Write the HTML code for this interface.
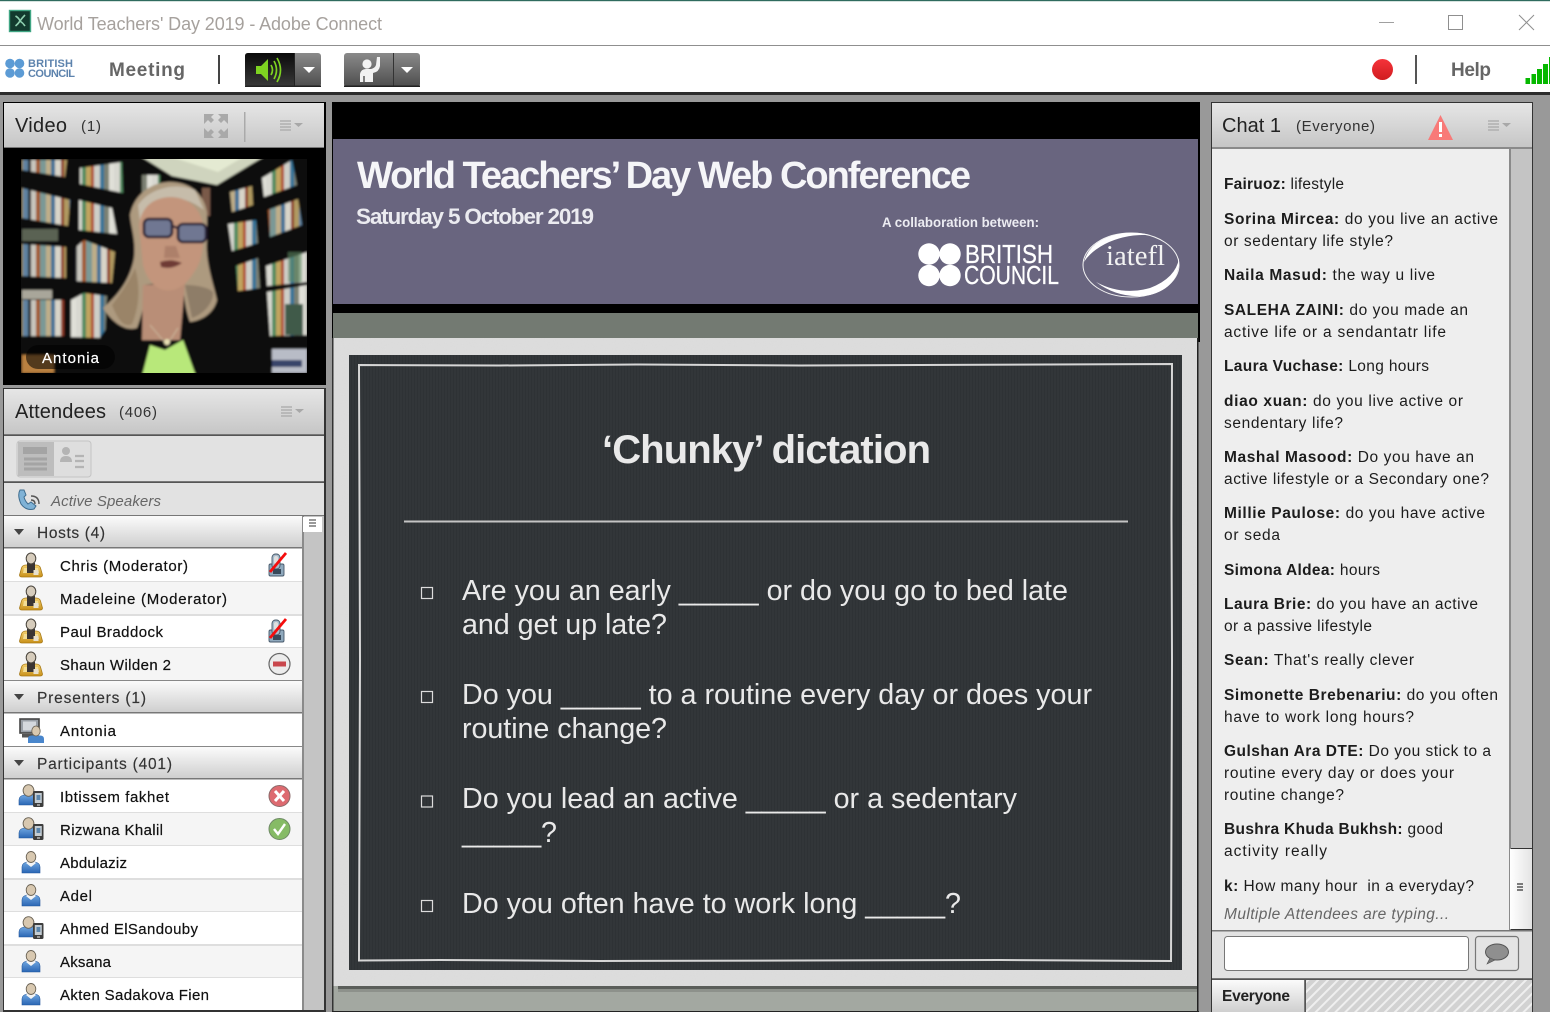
<!DOCTYPE html>
<html lang="en">
<head>
<meta charset="utf-8">
<title>World Teachers' Day 2019 - Adobe Connect</title>
<style>
html,body{margin:0;padding:0;background:#999;width:1550px;height:1012px;overflow:hidden}
svg{display:block;position:absolute;left:0;top:0}
text{font-family:"Liberation Sans",sans-serif;white-space:pre}
.n{font-size:15px;fill:#111;stroke:#111;stroke-width:.2}
.s{font-size:15.5px;fill:#333;stroke:#333;stroke-width:.15}
.c{font-size:15.5px;fill:#1c1c1c}
.c tspan{font-weight:bold}
.sl{font-size:28.7px;fill:#e9e9e9}
</style>
</head>
<body>
<svg width="1550" height="1012" viewBox="0 0 1550 1012" xmlns="http://www.w3.org/2000/svg">
<defs>
<linearGradient id="hd" x1="0" y1="0" x2="0" y2="1"><stop offset="0" stop-color="#e6e6e6"/><stop offset="1" stop-color="#c6c6c6"/></linearGradient>
<linearGradient id="sec" x1="0" y1="0" x2="0" y2="1"><stop offset="0" stop-color="#fbfbfb"/><stop offset="1" stop-color="#cfcfcf"/></linearGradient>
<linearGradient id="blk" x1="0" y1="0" x2="0" y2="1"><stop offset="0" stop-color="#0a0a0a"/><stop offset="1" stop-color="#3a3a3a"/></linearGradient>
<linearGradient id="gry" x1="0" y1="0" x2="0" y2="1"><stop offset="0" stop-color="#8a8a8a"/><stop offset="1" stop-color="#4d4d4d"/></linearGradient>
<linearGradient id="red" x1="0" y1="0" x2="0" y2="1"><stop offset="0" stop-color="#f5333a"/><stop offset="1" stop-color="#d01c1f"/></linearGradient>
<linearGradient id="gold" x1="0" y1="0" x2="0" y2="1"><stop offset="0" stop-color="#f5d272"/><stop offset="1" stop-color="#c89018"/></linearGradient>
<linearGradient id="blu" x1="0" y1="0" x2="0" y2="1"><stop offset="0" stop-color="#6fa6e0"/><stop offset="1" stop-color="#2a66b4"/></linearGradient>
<linearGradient id="white" x1="0" y1="0" x2="1" y2="0"><stop offset="0" stop-color="#fff"/><stop offset="1" stop-color="#e4e4e4"/></linearGradient>
<pattern id="hatch" width="7" height="7" patternUnits="userSpaceOnUse" patternTransform="rotate(45)"><rect width="7" height="7" fill="#d2d2d2"/><rect width="2" height="7" fill="#efefef"/></pattern>
<pattern id="bk1" width="46" height="80" patternUnits="userSpaceOnUse"><rect width="46" height="80" fill="#2c2c2e"/><rect x="0" width="5" height="80" fill="#bfae88"/><rect x="5" width="4" height="80" fill="#3e6f96"/><rect x="9" width="6" height="80" fill="#d8d4c8"/><rect x="15" width="3" height="80" fill="#8e3a28"/><rect x="18" width="5" height="80" fill="#b09a60"/><rect x="23" width="5" height="80" fill="#5f83a2"/><rect x="28" width="3" height="80" fill="#20262c"/><rect x="31" width="5" height="80" fill="#c8c6be"/><rect x="36" width="4" height="80" fill="#a2582a"/><rect x="40" width="6" height="80" fill="#7a9996"/></pattern>
<pattern id="bk2" width="38" height="80" patternUnits="userSpaceOnUse"><rect width="38" height="80" fill="#222424"/><rect x="0" width="6" height="80" fill="#d8d8d0"/><rect x="6" width="4" height="80" fill="#4f8a5e"/><rect x="10" width="5" height="80" fill="#c0a45e"/><rect x="15" width="3" height="80" fill="#b04e32"/><rect x="18" width="6" height="80" fill="#cfcfc8"/><rect x="24" width="4" height="80" fill="#36749a"/><rect x="28" width="5" height="80" fill="#7c8072"/><rect x="33" width="5" height="80" fill="#e0e0d8"/></pattern>
<pattern id="wv" width="3" height="3" patternUnits="userSpaceOnUse"><rect width="3" height="3" fill="#323639"/><rect width="1" height="3" fill="#2e3235"/></pattern>
<filter id="bl" x="-5%" y="-5%" width="110%" height="110%"><feGaussianBlur stdDeviation="1.1"/></filter>
<filter id="ic" x="-15%" y="-15%" width="130%" height="130%"><feGaussianBlur stdDeviation="0.3"/></filter>
<filter id="noise" x="0" y="0" width="100%" height="100%"><feTurbulence type="fractalNoise" baseFrequency="0.9" numOctaves="2" seed="3"/><feColorMatrix values="0 0 0 0 0.5  0 0 0 0 0.5  0 0 0 0 0.5  0 0 0 0.5 -0.12"/></filter>

<g id="host" filter="url(#ic)">
 <path d="M-11.5 10 L-9.5 3 Q-8.5 0 -5 0 L5 0 Q8.5 0 9.5 3 L11.5 10 Q11.5 12 9 12 L-9 12 Q-11.5 12 -11.5 10Z" fill="url(#gold)" stroke="#a87a18" stroke-width=".8"/>
 <path d="M-8 8 L-7 3 L7 3 L8 8Z" fill="#f3dd94"/>
 <path d="M-4 -2 L4 -2 L4 8 L-4 8Z" fill="#3a3632"/>
 <ellipse cx="0" cy="-6.5" rx="4.8" ry="5.5" fill="#d6ccbc" stroke="#4a443c" stroke-width="1"/>
 <rect x="2.5" y="5" width="5" height="5" fill="#e8e0cc"/>
</g>
<g id="user" filter="url(#ic)">
 <path d="M-9 11 L-9 5 Q-9 1 -4 0 L4 0 Q9 1 9 5 L9 11Z" fill="url(#blu)" stroke="#24589c" stroke-width=".6"/>
 <path d="M-5 1 L0 5 L5 1 L3 -1 L-3 -1Z" fill="#f4f4f4"/>
 <ellipse cx="0" cy="-5" rx="4.8" ry="5.5" fill="#d8c8b0" stroke="#6a6254" stroke-width=".9"/>
</g>
<g id="mob" filter="url(#ic)">
 <path d="M-13 9 L-13 4 Q-13 0 -8 -1 L1 -1 Q5 0 5 4 L5 9Z" fill="url(#blu)" stroke="#24589c" stroke-width=".6"/>
 <ellipse cx="-3.5" cy="-5.5" rx="5.4" ry="5.8" fill="#d8c8b0" stroke="#6a6254" stroke-width=".9"/>
 <rect x="1" y="-5" width="10.5" height="16" rx="1.2" fill="#3c3c3c"/>
 <rect x="2.8" y="-3" width="7" height="10" fill="#c4ccd2"/>
 <rect x="4.5" y="-1" width="3.8" height="5" fill="#5a84aa"/>
 <rect x="5" y="8" width="3" height="2" fill="#999"/>
</g>
<g id="mic" filter="url(#ic)">
 <rect x="-8" y="-1" width="15" height="12" rx="1.5" fill="#8fa9bd" stroke="#47596a" stroke-width=".9"/>
 <rect x="-5" y="-11" width="8" height="15" rx="3.5" fill="#a9bccb" stroke="#47596a" stroke-width=".9"/>
 <rect x="-3" y="-9" width="4" height="8" rx="2" fill="#dfdfdf"/>
 <path d="M-4 4 L4 4 L4 9 L-4 9Z" fill="#39495a"/>
 <path d="M-7 7 L9 -12" stroke="#f50d0d" stroke-width="2.8" fill="none"/>
</g>
</defs>

<!-- window background -->
<rect width="1550" height="1012" fill="#999"/>

<!-- title bar -->
<rect y="0" width="1550" height="45" fill="#fff"/>
<rect y="0" width="1550" height="1.2" fill="#2f6b5e"/>
<rect y="45" width="1550" height="1" fill="#8f8f8f"/>
<rect x="9.5" y="10.5" width="21" height="21" fill="#123a2e" stroke="#3fa583" stroke-width="1.4"/>
<path d="M15.5 16 Q19 18 20 21 Q22 18 25 15 M20 21 Q18 24 15.5 26 M20 21 Q23 23 25 26" stroke="#8fd0b0" stroke-width="1.6" fill="none"/>
<text x="37" y="30" font-size="18" fill="#a6a19d" textLength="345">World Teachers' Day 2019 - Adobe Connect</text>
<rect x="1379" y="22" width="15" height="1" fill="#a0a0a0"/>
<rect x="1448.5" y="15.5" width="14" height="14" fill="none" stroke="#8f8f8f"/>
<path d="M1519 15 L1534 30 M1534 15 L1519 30" stroke="#8f8f8f" stroke-width="1" fill="none"/>

<!-- toolbar -->
<rect y="46" width="1550" height="46" fill="#fff"/>
<rect y="92" width="1550" height="3" fill="#2c2c2c"/>
<g fill="#5b9bd5" filter="url(#ic)">
 <circle cx="10" cy="63.5" r="4.8"/><circle cx="19.5" cy="63.5" r="4.8"/><circle cx="10" cy="73" r="4.8"/><circle cx="19.5" cy="73" r="4.8"/>
</g>
<text x="28" y="67" font-size="11" font-weight="bold" fill="#5d83ad" textLength="45">BRITISH</text>
<text x="28" y="77" font-size="11" font-weight="bold" fill="#5d83ad" textLength="47">COUNCIL</text>
<text x="109" y="76" font-size="19" font-weight="bold" fill="#666" textLength="76">Meeting</text>
<rect x="218" y="55" width="2" height="29" fill="#444"/>

<rect x="245" y="53" width="76" height="34" rx="3" fill="url(#gry)"/>
<path d="M248 53 H294 V87 H248 Q245 87 245 84 V56 Q245 53 248 53Z" fill="url(#blk)"/>
<rect x="294" y="53" width="1" height="34" fill="#222"/>
<rect x="245" y="85.5" width="76" height="1.5" fill="#222"/>
<path d="M256 66 L261 66 L268 59 V81 L261 74 L256 74Z" fill="#7ed321"/>
<path d="M271 65 Q274 70 271 75 M274 61 Q279 70 274 79 M277 58 Q284 70 277 82" stroke="#7ed321" stroke-width="1.7" fill="none"/>
<path d="M303 67 H315 L309 73Z" fill="#fff"/>

<rect x="344" y="53" width="76" height="34" rx="3" fill="url(#gry)"/>
<rect x="393" y="53" width="1" height="34" fill="#333"/>
<rect x="344" y="85.5" width="76" height="1.5" fill="#222"/>
<circle cx="367" cy="64" r="4.6" fill="#f2f2f2"/>
<path d="M360 82 V74 Q361 69 366 69 L371 69 Q375 68 376 65 L377 57 L380 57 L380 66 Q379 72 373 73 V82Z" fill="#f2f2f2"/>
<path d="M364 76 V82" stroke="#333" stroke-width="1.2"/>
<path d="M401 67 H413 L407 73Z" fill="#fff"/>

<circle cx="1382.5" cy="69.5" r="10.5" fill="url(#red)"/>
<rect x="1415" y="55" width="2" height="29" fill="#555"/>
<text x="1451" y="76" font-size="19" font-weight="bold" fill="#666" textLength="40">Help</text>
<g fill="#06b800">
 <rect x="1525.5" y="78" width="4.5" height="6"/><rect x="1531.5" y="74" width="4.5" height="10"/><rect x="1537" y="69" width="5" height="15"/><rect x="1543" y="64" width="5" height="20"/><rect x="1549" y="57" width="1" height="27"/>
</g>

<!-- VIDEO PANEL -->
<rect x="3" y="102" width="323" height="283" fill="#000"/>
<rect x="4" y="103" width="320" height="44" fill="url(#hd)"/>
<rect x="4" y="147" width="320" height="1" fill="#777"/>
<text x="15" y="132" font-size="20" fill="#222" textLength="52">Video</text>
<text x="81" y="131" font-size="15" fill="#333" textLength="20">(1)</text>
<g fill="#a9a9a9">
 <path d="M204 114 H214 L211 117 L214 120 L211 123 L208 120 L204 124Z"/>
 <path d="M228 114 H218 L221 117 L218 120 L221 123 L224 120 L228 124Z"/>
 <path d="M204 138 H214 L211 135 L214 132 L211 129 L208 132 L204 128Z"/>
 <path d="M228 138 H218 L221 135 L218 132 L221 129 L224 132 L228 128Z"/>
</g>
<rect x="244" y="112" width="1.5" height="30" fill="#aaa"/>
<path d="M280 121 H291 M280 124 H291 M280 127 H291 M280 130 H291" stroke="#a8a8a8" stroke-width="1.2"/>
<path d="M294 123 H303 L298.5 127Z" fill="#a8a8a8"/>

<!-- video image -->
<svg x="21" y="159" width="286" height="214" viewBox="21 159 286 214">
 <g filter="url(#bl)">
 <rect x="18" y="156" width="292" height="220" fill="#0b0b0e"/>
 <path d="M140 156 H265 L217 185 L172 176Z" fill="#cfd4be"/>
 <path d="M168 156 H245 L218 172Z" fill="#e4ead2"/>
 <g>
  <path d="M22 160 H67 L65 177 L22 170Z" fill="url(#bk1)"/>
  <path d="M80 168 L122 162 L123 193 L80 184Z" fill="url(#bk2)"/>
  <path d="M22 188 L70 200 L68 226 L22 218Z" fill="url(#bk1)"/>
  <path d="M79 200 L112 208 L117 234 L79 230Z" fill="url(#bk2)"/>
  <rect x="22" y="229" width="36" height="12" fill="#5a6252"/>
  <path d="M22 244 L66 247 L66 278 L22 276Z" fill="url(#bk1)"/>
  <path d="M75 248 L84 240 L115 252 L112 283 L75 281Z" fill="url(#bk1)"/>
  <rect x="22" y="290" width="30" height="9" fill="#a9a69a"/>
  <rect x="22" y="300" width="42" height="36" fill="url(#bk1)"/>
  <path d="M71 300 L84 293 L107 296 L105 338 L71 337Z" fill="url(#bk2)"/>
  <rect x="22" y="355" width="32" height="18" fill="#b98040"/>
  <rect x="142" y="175" width="18" height="20" fill="url(#bk2)"/>
  <rect x="202" y="188" width="8" height="28" fill="#7a5a48"/>
  <path d="M262 178 L292 160 L297 185 L264 197Z" fill="url(#bk2)"/>
  <path d="M230 192 L252 186 L253 205 L232 212Z" fill="url(#bk1)"/>
  <path d="M268 210 L298 199 L302 225 L270 237Z" fill="url(#bk1)"/>
  <path d="M228 224 L256 220 L258 243 L232 251Z" fill="url(#bk2)"/>
  <path d="M236 266 L258 258 L260 288 L238 291Z" fill="url(#bk2)"/>
  <path d="M266 266 L307 252 L307 282 L267 286Z" fill="url(#bk2)"/>
  <rect x="288" y="252" width="14" height="30" fill="#5f8a64" opacity=".6"/>
  <path d="M267 292 L307 285 L307 335 L270 336Z" fill="url(#bk2)"/>
  <rect x="285" y="304" width="18" height="31" fill="#3f5a48"/>
  <rect x="272" y="349" width="35" height="24" fill="#b8bcc6"/>
  <rect x="272" y="360" width="30" height="7" fill="#39456a"/>
 </g>
 <!-- body -->
 <path d="M88 376 Q95 325 128 315 L190 305 L245 315 Q262 340 268 376Z" fill="#0f0e11"/>
 <!-- headset -->
 <ellipse cx="130" cy="228" rx="11" ry="30" fill="#0c0c0f"/>
 <ellipse cx="206" cy="250" rx="9" ry="20" fill="#0c0c0f"/>
 <!-- hair -->
 <path d="M130 215 C134 195 150 183 168 182 C190 181 204 194 207 212 L207 240 C205 262 214 285 217 300 C214 312 204 320 190 322 C184 305 184 292 182 280 L145 285 C146 300 142 315 137 328 C125 332 112 322 103 308 C118 295 130 280 134 258 C136 240 131 228 130 215Z" fill="#ad9a7f"/>
 <path d="M112 305 C122 292 130 280 135 268 C140 285 140 305 132 324 C124 328 118 320 112 305Z" fill="#9a8468"/>
 <path d="M185 285 C195 285 208 287 213 292 C214 302 204 314 192 318Z" fill="#8e7d68"/>
 <path d="M138 205 C150 188 175 182 195 190 L204 210 C185 196 165 192 150 212 L140 222Z" fill="#c6bcaa"/>
 <!-- neck/chest -->
 <path d="M143 285 L142 340 L180 340 L185 283Z" fill="#b98e77"/>
 <!-- face -->
 <path d="M139 225 C142 205 155 197 172 197 C190 198 201 210 203 225 C205 250 200 265 194 272 C186 286 175 292 164 290 C152 287 146 276 143 265Z" fill="#c3957c"/>
 <path d="M165 246 L176 246 L180 258 L164 258Z" fill="#ad806a"/>
 <path d="M160 262 Q171 258 182 263 Q172 270 161 267Z" fill="#6e3a34"/>
 <!-- glasses -->
 <g fill="#6f7792" stroke="#261c32" stroke-width="2.6">
  <rect x="144" y="219" width="28" height="18" rx="5"/>
  <rect x="178" y="224" width="28" height="18" rx="5"/>
 </g>
 <path d="M172 226 L178 228" stroke="#261c32" stroke-width="2.5"/>
 <!-- green top -->
 <path d="M142 376 L150 345 L165 350 L183 340 L196 376Z" fill="#b8e87a"/>
 <path d="M150 325 L167 345 L178 328" stroke="#d0c0a4" stroke-width=".8" fill="none"/>
 <circle cx="167" cy="342" r="3" fill="#e8e0b4"/>
 </g>
</svg>
<rect x="26" y="345" width="89" height="24" rx="12" fill="#000" opacity=".55"/>
<text x="42" y="363" font-size="15" fill="#fff" stroke="#fff" stroke-width=".2" textLength="57">Antonia</text>

<!-- ATTENDEES PANEL -->
<rect x="3" y="388" width="323" height="624" fill="#333"/>
<rect x="4" y="389" width="320" height="45" fill="url(#hd)"/>
<rect x="4" y="434" width="320" height="1.5" fill="#777"/>
<text x="15" y="418" font-size="20" fill="#222" textLength="91">Attendees</text>
<text x="119" y="417" font-size="15" fill="#333" textLength="38">(406)</text>
<path d="M281 407 H292 M281 410 H292 M281 413 H292 M281 416 H292" stroke="#a8a8a8" stroke-width="1.2"/>
<path d="M295 409 H304 L299.5 413Z" fill="#a8a8a8"/>

<rect x="4" y="436" width="320" height="46" fill="#e2e2e2"/>
<rect x="4" y="481" width="320" height="1.5" fill="#777"/>
<rect x="17" y="441" width="74" height="36" rx="3" fill="#dedede" stroke="#c4c4c4"/>
<rect x="18" y="442" width="36" height="34" fill="#bdbdbd"/>
<rect x="23" y="447" width="24" height="7" fill="#a4a4a4"/>
<path d="M24 459 H47 M24 464 H47 M24 469 H47" stroke="#a4a4a4" stroke-width="3"/>
<circle cx="66" cy="451" r="4" fill="#b4b4b4"/>
<path d="M60 462 Q60 456 66 456 Q72 456 72 462Z" fill="#b4b4b4"/>
<path d="M75 456 H84 M75 461 H84 M75 467 H84" stroke="#b4b4b4" stroke-width="2.2"/>

<rect x="4" y="483" width="320" height="32" fill="#e2e2e2"/>
<rect x="4" y="515" width="320" height="1.5" fill="#777"/>
<path d="M20 490 Q17 495 21 504 Q26 511 34 509 L36 506 L31 502 L28 504 Q25 501 24 497 L26 495 L24 490Z" fill="#7fb2d6" stroke="#3e6c8e" stroke-width="1"/>
<path d="M31 500 Q35 500 35 504 M31 496 Q39 496 39 504" stroke="#555" stroke-width="1.4" fill="none"/>
<text x="51" y="506" font-size="15" font-style="italic" fill="#666" textLength="110">Active Speakers</text>

<!-- list body -->
<rect x="4" y="516" width="298" height="494" fill="#fff"/>
<g fill="#f5f5f5">
 <rect x="4" y="582" width="298" height="32"/><rect x="4" y="648" width="298" height="32"/>
 <rect x="4" y="813" width="298" height="32"/><rect x="4" y="879" width="298" height="32"/><rect x="4" y="945" width="298" height="32"/>
</g>
<g fill="#dedede">
 <rect x="4" y="581" width="298" height="1"/><rect x="4" y="614" width="298" height="2"/><rect x="4" y="647" width="298" height="1"/>
 <rect x="4" y="812" width="298" height="1"/><rect x="4" y="845" width="298" height="1"/><rect x="4" y="878" width="298" height="2"/><rect x="4" y="911" width="298" height="1"/><rect x="4" y="944" width="298" height="2"/><rect x="4" y="977" width="298" height="1"/>
</g>
<rect x="4" y="516" width="298" height="31" fill="url(#sec)"/><rect x="4" y="547" width="298" height="1.5" fill="#777"/>
<rect x="4" y="681" width="298" height="31" fill="url(#sec)"/><rect x="4" y="712" width="298" height="1.5" fill="#777"/>
<rect x="4" y="747" width="298" height="31" fill="url(#sec)"/><rect x="4" y="778" width="298" height="1.5" fill="#777"/>
<rect x="4" y="680" width="298" height="1" fill="#888"/>
<rect x="4" y="746" width="298" height="1" fill="#888"/>
<path d="M14 529 H24 L19 535Z M14 694 H24 L19 700Z M14 760 H24 L19 766Z" fill="#444"/>
<text class="s" x="37" y="538" textLength="68">Hosts (4)</text>
<text class="s" x="37" y="703" textLength="109">Presenters (1)</text>
<text class="s" x="37" y="769" textLength="135">Participants (401)</text>

<g class="rows">
<text class="n" x="60" y="571" textLength="128">Chris (Moderator)</text>
<text class="n" x="60" y="604" textLength="167">Madeleine (Moderator)</text>
<text class="n" x="60" y="637" textLength="103">Paul Braddock</text>
<text class="n" x="60" y="670" textLength="111">Shaun Wilden 2</text>
<text class="n" x="60" y="736" textLength="56">Antonia</text>
<text class="n" x="60" y="802" textLength="109">Ibtissem fakhet</text>
<text class="n" x="60" y="835" textLength="103">Rizwana Khalil</text>
<text class="n" x="60" y="868" textLength="67">Abdulaziz</text>
<text class="n" x="60" y="901" textLength="32">Adel</text>
<text class="n" x="60" y="934" textLength="138">Ahmed ElSandouby</text>
<text class="n" x="60" y="967" textLength="51">Aksana</text>
<text class="n" x="60" y="1000" textLength="149">Akten Sadakova Fien</text>
</g>

<use href="#host" x="31" y="565"/>
<use href="#host" x="31" y="598"/>
<use href="#host" x="31" y="631"/>
<use href="#host" x="31" y="664"/>
<use href="#mic" x="277" y="565"/>
<use href="#mic" x="277" y="631"/>
<circle cx="279.5" cy="664" r="10.5" fill="#ececec" stroke="#666" stroke-width="1.2"/>
<rect x="273" y="661.5" width="13" height="5" fill="#c9474d"/>

<!-- presenter icon -->
<g filter="url(#ic)">
 <rect x="20" y="719" width="19" height="14" fill="#9aa0a8" stroke="#444" stroke-width="1.6"/>
 <rect x="23" y="721.5" width="13" height="9" fill="#d4d8de"/>
 <rect x="22" y="734" width="13" height="3.5" fill="#555"/>
 <path d="M28 743 V738.5 Q28 735.5 32 735.5 H40 Q44 735.5 44 739 V743Z" fill="#4a86cc"/>
 <ellipse cx="36" cy="731" rx="4.2" ry="5" fill="#d8c8b0" stroke="#6a6254" stroke-width=".8"/>
</g>

<use href="#mob" x="32" y="796"/>
<use href="#mob" x="32" y="829"/>
<use href="#user" x="31" y="862"/>
<use href="#user" x="31" y="895"/>
<use href="#mob" x="32" y="928"/>
<use href="#user" x="31" y="961"/>
<use href="#user" x="31" y="994"/>

<circle cx="279.5" cy="796" r="10.5" fill="#dd6a70" stroke="#8a6a6a" stroke-width="1"/>
<path d="M275 791 L284 801 M284 791 L275 801" stroke="#fff" stroke-width="3"/>
<circle cx="279.5" cy="829" r="10.5" fill="#86bb66" stroke="#6f8a66" stroke-width="1"/>
<path d="M274 829 L278 834 L285 824" stroke="#fff" stroke-width="2.4" fill="none"/>

<!-- attendees scrollbar -->
<rect x="302" y="516" width="22" height="494" fill="#c4c4c4"/>
<rect x="302" y="516" width="2" height="494" fill="#8a8a8a"/>
<rect x="303" y="517" width="19" height="15" fill="#fff"/>
<path d="M309 520 H316 M309 523 H316 M309 526 H316" stroke="#333" stroke-width="1"/>
<rect x="3" y="1010" width="323" height="2" fill="#333"/>

<!-- CENTER -->
<rect x="332" y="102" width="868" height="240" fill="#000"/>
<rect x="333" y="139" width="865" height="165" fill="#69657f"/>
<rect x="333" y="313" width="865" height="26" fill="#737a72"/>
<text x="357" y="188" font-size="38" font-weight="bold" fill="#f5f5f8" textLength="614">World Teachers’ Day Web Conference</text>
<text x="356" y="224" font-size="22.5" font-weight="bold" fill="#ebebf0" textLength="238">Saturday 5 October 2019</text>
<text x="882" y="227" font-size="14" font-weight="bold" fill="#ececf2" textLength="157" lengthAdjust="spacingAndGlyphs">A collaboration between:</text>
<g fill="#fff">
 <circle cx="929" cy="254" r="10.7"/><circle cx="950" cy="254" r="10.7"/><circle cx="929" cy="275.5" r="10.7"/><circle cx="950" cy="275.5" r="10.7"/>
</g>
<text x="965" y="263" font-size="26" fill="#fff" stroke="#fff" stroke-width=".3" textLength="88" lengthAdjust="spacingAndGlyphs">BRITISH</text>
<text x="964" y="284" font-size="26" fill="#fff" stroke="#fff" stroke-width=".3" textLength="95" lengthAdjust="spacingAndGlyphs">COUNCIL</text>
<ellipse cx="1131" cy="265" rx="48" ry="32" fill="none" stroke="#f4f4f4" stroke-width="1"/>
<path d="M1084 262 Q1090 238 1125 233 Q1140 232 1150 235 Q1125 234 1105 244 Q1090 252 1084 262Z" fill="#fff"/>
<path d="M1096 282 Q1120 300 1150 295 Q1180 287 1179 258 Q1176 278 1150 288 Q1122 296 1096 282Z" fill="#fff"/>
<text x="1106" y="265" font-size="28" fill="#f2f2f2" style="font-family:'Liberation Serif',serif" textLength="59" lengthAdjust="spacingAndGlyphs">iatefl</text>

<!-- slide paper -->
<rect x="333" y="338" width="865" height="648" fill="#dddddd"/>
<rect x="333" y="338" width="865" height="648" filter="url(#noise)" opacity=".25"/>
<rect x="333" y="986" width="865" height="25" fill="#a3a8a1"/>
<rect x="338" y="986" width="860" height="3" fill="#5b5e5a"/>
<rect x="338" y="989" width="860" height="3" fill="#8d918b"/>
<rect x="332" y="338" width="1.5" height="674" fill="#333"/>
<rect x="1197" y="338" width="1.5" height="674" fill="#222"/>
<rect x="332" y="1011" width="867" height="1" fill="#222"/>
<rect x="349" y="355" width="833" height="615" fill="url(#wv)"/>
<path d="M359 365 L500 365.5 L640 364.5 L800 365.5 L920 365 L1172 364 L1171.5 520 L1172 660 L1171 961 L1000 960 L800 960.5 L600 961 L440 960 L359 960.5 L360 660 L359.5 500 Z" fill="none" stroke="#d6d6d6" stroke-width="2"/>
<rect x="404" y="520.5" width="724" height="2" fill="#c4c4c4"/>

<text x="602" y="463" font-size="40" font-weight="bold" fill="#e9e9e9" textLength="329">‘Chunky’ dictation</text>
<g fill="none" stroke="#dcdcdc" stroke-width="1.2">
 <rect x="421.5" y="587.5" width="11" height="11"/>
 <rect x="421.5" y="691.5" width="11" height="11"/>
 <rect x="421.5" y="796" width="11" height="11"/>
 <rect x="421.5" y="900.5" width="11" height="11"/>
</g>
<text class="sl" x="462" y="600" textLength="606">Are you an early _____ or do you go to bed late</text>
<text class="sl" x="462" y="634" textLength="205">and get up late?</text>
<text class="sl" x="462" y="704" textLength="630">Do you _____ to a routine every day or does your</text>
<text class="sl" x="462" y="738" textLength="205">routine change?</text>
<text class="sl" x="462" y="808" textLength="555">Do you lead an active _____ or a sedentary</text>
<text class="sl" x="462" y="842" textLength="95">_____?</text>
<text class="sl" x="462" y="913" textLength="499">Do you often have to work long _____?</text>

<!-- CHAT PANEL -->
<rect x="1211" y="102" width="322" height="910" fill="#333"/>
<rect x="1212" y="103" width="320" height="44" fill="url(#hd)"/>
<rect x="1212" y="147" width="320" height="2" fill="#8a8a8a"/>
<text x="1222" y="132" font-size="20" fill="#222" textLength="59">Chat 1</text>
<text x="1296" y="131" font-size="15" fill="#333" textLength="79">(Everyone)</text>
<path d="M1440.5 115 L1453 140 H1428Z" fill="#f87a78"/>
<rect x="1439" y="122" width="3" height="10" fill="#fff"/>
<rect x="1439" y="134" width="3" height="3" fill="#fff"/>
<path d="M1488 121 H1499 M1488 124 H1499 M1488 127 H1499 M1488 130 H1499" stroke="#a8a8a8" stroke-width="1.2"/>
<path d="M1502 123 H1511 L1506.5 127Z" fill="#a8a8a8"/>

<rect x="1212" y="149" width="297" height="781" fill="#eeeeee"/>
<rect x="1509" y="149" width="2" height="781" fill="#8a8a8a"/>
<rect x="1511" y="149" width="21" height="699" fill="#c4c4c4"/>
<rect x="1510" y="849" width="22" height="80" fill="url(#white)"/>
<path d="M1517 884 H1523 M1517 887 H1523 M1517 890 H1523" stroke="#333" stroke-width="1.2"/>

<text class="c" x="1224" y="189" textLength="120"><tspan>Fairuoz:</tspan> lifestyle</text>
<text class="c" x="1224" y="224" textLength="274"><tspan>Sorina Mircea:</tspan> do you live an active</text>
<text class="c" x="1224" y="246" textLength="169">or sedentary life style?</text>
<text class="c" x="1224" y="280" textLength="211"><tspan>Naila Masud:</tspan> the way u live</text>
<text class="c" x="1224" y="315" textLength="244"><tspan>SALEHA ZAINI:</tspan> do you made an</text>
<text class="c" x="1224" y="337" textLength="222">active life or a sendantatr life</text>
<text class="c" x="1224" y="371" textLength="205"><tspan>Laura Vuchase:</tspan> Long hours</text>
<text class="c" x="1224" y="406" textLength="239"><tspan>diao xuan:</tspan> do you live active or</text>
<text class="c" x="1224" y="428" textLength="119">sendentary life?</text>
<text class="c" x="1224" y="462" textLength="250"><tspan>Mashal Masood:</tspan> Do you have an</text>
<text class="c" x="1224" y="484" textLength="265">active lifestyle or a Secondary one?</text>
<text class="c" x="1224" y="518" textLength="261"><tspan>Millie Paulose:</tspan> do you have active</text>
<text class="c" x="1224" y="540" textLength="56">or seda</text>
<text class="c" x="1224" y="575" textLength="156"><tspan>Simona Aldea:</tspan> hours</text>
<text class="c" x="1224" y="609" textLength="254"><tspan>Laura Brie:</tspan> do you have an active</text>
<text class="c" x="1224" y="631" textLength="148">or a passive lifestyle</text>
<text class="c" x="1224" y="665" textLength="190"><tspan>Sean:</tspan> That's really clever</text>
<text class="c" x="1224" y="700" textLength="274"><tspan>Simonette Brebenariu:</tspan> do you often</text>
<text class="c" x="1224" y="722" textLength="190">have to work long hours?</text>
<text class="c" x="1224" y="756" textLength="267"><tspan>Gulshan Ara DTE:</tspan> Do you stick to a</text>
<text class="c" x="1224" y="778" textLength="230">routine every day or does your</text>
<text class="c" x="1224" y="800" textLength="120">routine change?</text>
<text class="c" x="1224" y="834" textLength="219"><tspan>Bushra Khuda Bukhsh:</tspan> good</text>
<text class="c" x="1224" y="856" textLength="103">activity really</text>
<text class="c" x="1224" y="891" textLength="250"><tspan>k:</tspan> How many hour  in a everyday?</text>
<text x="1224" y="919" font-size="15.5" font-style="italic" fill="#666" textLength="225">Multiple Attendees are typing...</text>

<rect x="1212" y="930" width="320" height="48" fill="#e2e2e2"/>
<rect x="1212" y="930" width="320" height="1.5" fill="#777"/>
<rect x="1224.5" y="936.5" width="244" height="34" rx="3" fill="#fff" stroke="#777"/>
<rect x="1475.5" y="936.5" width="43" height="34" rx="3" fill="#e4e4e4" stroke="#777" stroke-width="1.2"/>
<ellipse cx="1497" cy="952" rx="11.5" ry="8" fill="#8f8f8f" stroke="#555"/>
<path d="M1490 958 L1487 964 L1495 960Z" fill="#777" stroke="#555" stroke-width=".6"/>
<rect x="1212" y="978" width="320" height="1.5" fill="#777"/>
<rect x="1306" y="980" width="226" height="32" fill="url(#hatch)"/>
<rect x="1212" y="980" width="92" height="32" fill="url(#sec)"/>
<rect x="1304" y="980" width="1.5" height="32" fill="#777"/>
<text x="1222" y="1001" font-size="15.5" fill="#222" font-weight="bold" textLength="68">Everyone</text>
</svg>
</body>
</html>
